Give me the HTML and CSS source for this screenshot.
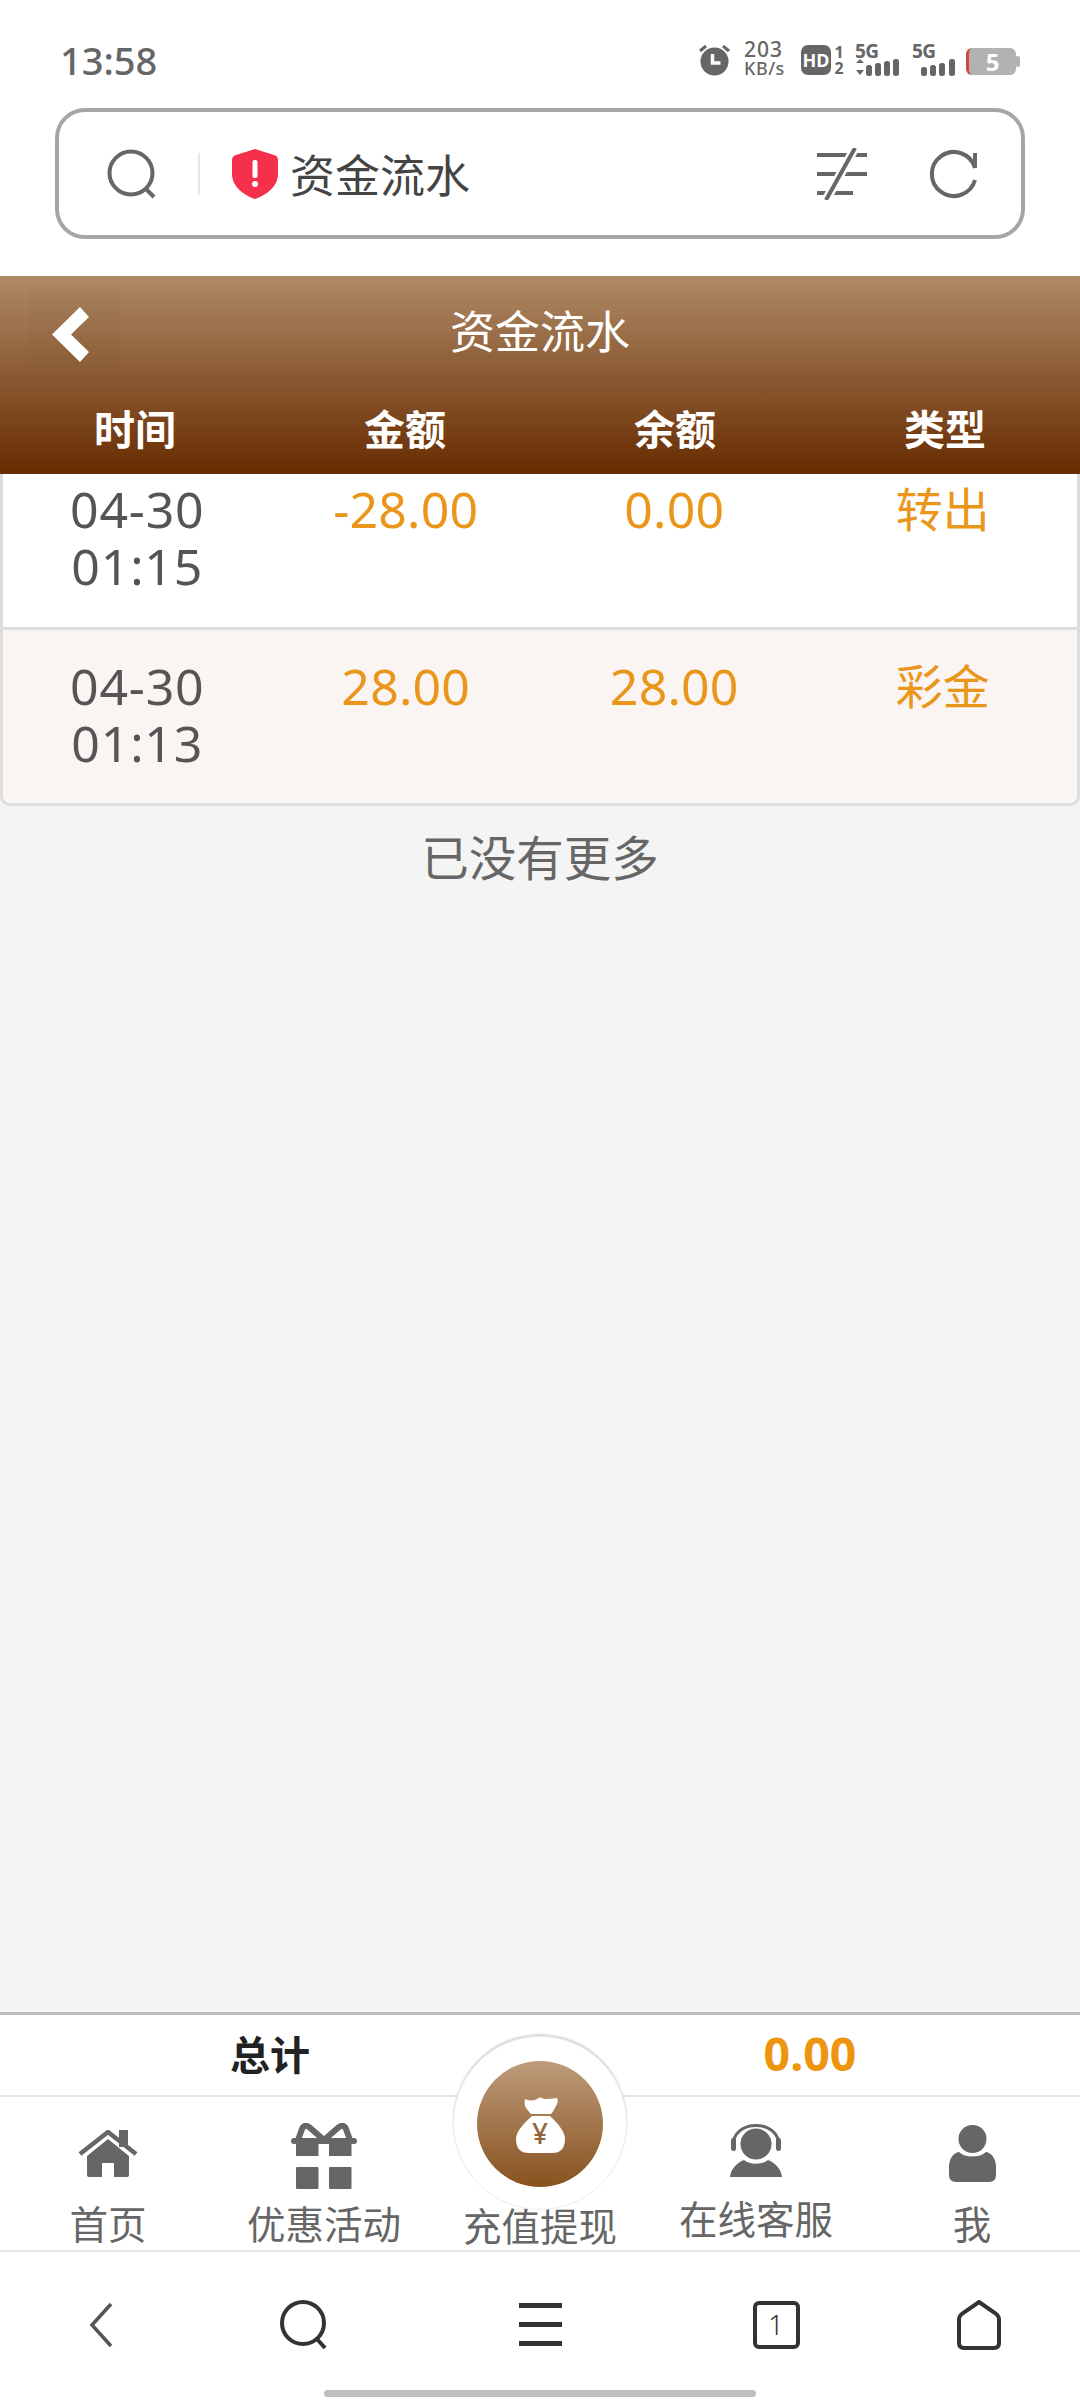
FILE: index.html
```html
<!DOCTYPE html>
<html>
<head>
  <meta charset="UTF-8">
  <title>资金流水</title>
  <link rel="stylesheet" href="styles.css">
</head>
<body>
  <div class="status-bar">
    <span class="clock">13:58</span>
    <div class="status-icons">
      <svg class="ic-alarm" width="33" height="32" viewBox="0 0 33 32">
        <circle cx="16.5" cy="17.5" r="14" fill="#666"/>
        <path d="M14.5 10v9h8" fill="none" stroke="#fff" stroke-width="3.5"/>
        <path d="M2 7l6-5M31 7l-6-5" stroke="#666" stroke-width="3"/>
      </svg>
      <div class="speed"><span>203</span><span class="speed-unit">KB/s</span></div>
      <div class="hd">HD</div>
      <div class="sim"><span>1</span><span>2</span></div>
      <div class="signal">
        <span class="sig-text">5G</span>
        <svg width="44" height="17" viewBox="0 0 44 17">
          <path d="M1 4l4-4 4 4zM1 11l4 5 4-5z" fill="#666"/>
          <rect x="11" y="6" width="6" height="11" rx="2.5" fill="#666"/>
          <rect x="20" y="4" width="6" height="13" rx="2.5" fill="#666"/>
          <rect x="29" y="2" width="6" height="15" rx="2.5" fill="#666"/>
          <rect x="38" y="0" width="6" height="17" rx="2.5" fill="#666"/>
        </svg>
      </div>
      <div class="signal signal-2">
        <span class="sig-text">5G</span>
        <svg width="44" height="17" viewBox="0 0 44 17">
          <rect x="9" y="8" width="6" height="9" rx="2.5" fill="#666"/>
          <rect x="18" y="6" width="6" height="11" rx="2.5" fill="#666"/>
          <rect x="27" y="4" width="6" height="13" rx="2.5" fill="#666"/>
          <rect x="37" y="0" width="6" height="17" rx="2.5" fill="#666"/>
        </svg>
      </div>
      <div class="battery">5</div>
    </div>
  </div>

  <div class="address-bar">
    <svg class="ic-search" width="50" height="50" viewBox="0 0 50 50">
      <circle cx="24" cy="24" r="21.5" fill="none" stroke="#666" stroke-width="4"/>
      <path d="M39 40l8 8" stroke="#666" stroke-width="4"/>
    </svg>
    <span class="address-sep"></span>
    <svg class="ic-shield" width="46" height="50" viewBox="0 0 46 50">
      <path d="M23 0l19 6q4 1 4 5v14c0 12-11 21-23 25C11 46 0 37 0 25V11q0-4 4-5z" fill="#f5304a"/>
      <rect x="20.5" y="11" width="5" height="18" rx="2" fill="#fff"/>
      <circle cx="23" cy="35" r="3" fill="#fff"/>
    </svg>
    <span class="address-text">资金流水</span>
    <svg class="ic-filter" width="52" height="52" viewBox="0 0 52 52">
      <path d="M1 7h50M1 26h50M1 45h36" stroke="#666" stroke-width="4"/>
      <path d="M39 0L10 52" stroke="#fff" stroke-width="9"/>
      <path d="M39 0L10 52" stroke="#666" stroke-width="4"/>
    </svg>
    <svg class="ic-refresh" width="50" height="50" viewBox="0 0 50 50">
      <path d="M46 19A22 22 0 1 0 46 31M46 4v15" fill="none" stroke="#666" stroke-width="4"/>
    </svg>
  </div>

  <div class="page-head">
    <div class="title-row">
      <div class="back-btn">
        <svg width="37" height="55" viewBox="0 0 37 55"><path d="M0 27.5L28 0l9 10-18 17.5L37 45l-9 10z" fill="#fff"/></svg>
      </div>
      <div class="page-title">资金流水</div>
    </div>
    <div class="col-row">
      <div>时间</div>
      <div>金额</div>
      <div>余额</div>
      <div>类型</div>
    </div>
  </div>

  <div class="main">
    <div class="flow-list">
      <div class="flow-row flow-row-cut">
        <div>04-30<br>01:15</div>
        <div class="money">-28.00</div>
        <div class="money">0.00</div>
        <div class="money kind">转出</div>
      </div>
      <div class="flow-row flow-row-alt">
        <div>04-30<br>01:13</div>
        <div class="money">28.00</div>
        <div class="money">28.00</div>
        <div class="money kind">彩金</div>
      </div>
    </div>
    <p class="no-more">已没有更多</p>
  </div>

  <div class="total-bar">
    <div class="total-label">总计</div>
    <div class="total-num">0.00</div>
  </div>

  <div class="tab-bar">
    <div class="tab tab-home">
      <svg width="60" height="47" viewBox="0 0 60 47">
        <rect x="41" y="0" width="9" height="17" fill="#666"/>
        <path d="M2 24L30 2l28 22" fill="none" stroke="#666" stroke-width="4.5"/>
        <path d="M9 26L30 9l21 17v19q0 2-2 2H36V33H24v14H11q-2 0-2-2z" fill="#666"/>
      </svg>
      <span>首页</span>
    </div>
    <div class="tab tab-gift">
      <svg width="66" height="66" viewBox="0 0 66 66">
        <path d="M33 17L18 4q-5-3-7 2L7 17M33 17L48 4q5-3 7 2l4 11" fill="none" stroke="#666" stroke-width="6"/>
        <rect x="0" y="15" width="66" height="6" rx="3" fill="#666"/>
        <rect x="5" y="21" width="22.5" height="12" fill="#666"/>
        <rect x="38" y="21" width="22.5" height="12" fill="#666"/>
        <rect x="5" y="44" width="22.5" height="22" rx="1" fill="#666"/>
        <rect x="38" y="44" width="22.5" height="22" rx="1" fill="#666"/>
      </svg>
      <span>优惠活动</span>
    </div>
    <div class="tab tab-center">
      <div class="wallet-ring">
        <div class="wallet-btn">
          <svg class="ic-bag" width="49" height="57" viewBox="0 0 49 57">
            <path d="M9 3q7 3 12 0 3-3 7 0 7 0 13-1 2 3-1 8-3 6-5 8H15q-4-4-6-8-1-4 0-7z" fill="#fff"/>
            <path d="M16 20h18q15 14 15 23 0 14-13 14H13Q0 57 0 43q0-9 16-23z" fill="#fff"/>
          </svg>
          <span class="yen">¥</span>
        </div>
      </div>
      <span>充值提现</span>
    </div>
    <div class="tab tab-service">
      <svg width="52" height="53" viewBox="0 0 52 53">
        <path d="M3 22C3 9 13 1.500 26 1.500S49 9 49 22" fill="none" stroke="#666" stroke-width="3"/>
        <rect x="1" y="14" width="5" height="13" rx="2.500" fill="#666"/>
        <rect x="46" y="14" width="5" height="13" rx="2.500" fill="#666"/>
        <circle cx="26" cy="20" r="15.500" fill="#666"/>
        <path d="M0 53c1-9 8-15 14-17 6 5 18 5 24 0 6 2 13 8 14 17z" fill="#666"/>
      </svg>
      <span>在线客服</span>
    </div>
    <div class="tab tab-me">
      <svg width="47" height="57" viewBox="0 0 47 57">
        <circle cx="23.500" cy="14" r="14" fill="#666"/>
        <path d="M10 27c6 6 21 6 27 0 6 1 10 7 10 15v8q0 7-7 7H7q-7 0-7-7v-8c0-8 4-14 10-15z" fill="#666"/>
      </svg>
      <span>我</span>
    </div>
  </div>

  <div class="nav-bar">
    <div class="nav-icons">
      <div class="nav-cell">
        <svg width="24" height="46" viewBox="0 0 24 46"><path d="M22 2L3 23l19 21" fill="none" stroke="#555" stroke-width="3.500"/></svg>
      </div>
      <div class="nav-cell">
        <svg width="48" height="50" viewBox="0 0 48 50">
          <circle cx="23" cy="23" r="21" fill="none" stroke="#333" stroke-width="4"/>
          <path d="M37 39l8 9" stroke="#333" stroke-width="4"/>
        </svg>
      </div>
      <div class="nav-cell">
        <div class="burger"><i></i><i></i><i></i></div>
      </div>
      <div class="nav-cell">
        <div class="tabs-count">1</div>
      </div>
      <div class="nav-cell">
        <svg width="44" height="50" viewBox="0 0 44 50">
          <path d="M22 2L38 13q4 3 4 6v24q0 5-5 5H7q-5 0-5-5V19q0-3 4-6z" fill="none" stroke="#333" stroke-width="4"/>
        </svg>
      </div>
    </div>
    <div class="home-bar"></div>
  </div>
</body>
</html>
```

FILE: styles.css
```css
* {
  box-sizing: border-box;
}

body {
  margin: 0;
  width: 1080px;
  height: 2400px;
  overflow: hidden;
  display: flex;
  flex-direction: column;
  background: #fff;
  font-family: "Noto Sans", "Noto Sans CJK SC", sans-serif;
}

svg {
  display: block;
}

/* status bar */
.status-bar {
  height: 108px;
  flex-shrink: 0;
  display: flex;
  justify-content: space-between;
  padding: 38px 60px 0 60px;
}

.clock {
  font-size: 38px;
  font-weight: 500;
  line-height: 44px;
  color: #666;
}

.status-icons {
  display: flex;
  align-items: flex-start;
  height: 40px;
  color: #666;
}

.ic-alarm {
  margin-top: 6px;
}

.speed {
  display: flex;
  flex-direction: column;
  margin-left: 13px;
  margin-top: 2px;
  width: 44px;
  font-size: 21px;
  line-height: 19px;
  font-weight: 500;
  letter-spacing: 1px;
}

.speed-unit {
  font-size: 18px;
  letter-spacing: 0.5px;
}

.hd {
  width: 30px;
  height: 30px;
  margin-left: 13px;
  margin-top: 7px;
  background: #666;
  border-radius: 7px;
  color: #fff;
  font-size: 18px;
  font-weight: 700;
  line-height: 30px;
  text-align: center;
}

.sim {
  display: flex;
  flex-direction: column;
  width: 12px;
  margin-left: 2px;
  margin-top: 6px;
  font-size: 16px;
  font-weight: 700;
  line-height: 16px;
  text-align: center;
}

.signal {
  width: 44px;
  margin-left: 10px;
  margin-top: 6px;
}

.signal-2 {
  margin-left: 13px;
}

.sig-text {
  display: block;
  height: 15px;
  font-size: 19px;
  font-weight: 700;
  line-height: 15px;
  letter-spacing: -0.5px;
}

.battery {
  position: relative;
  width: 50px;
  height: 27px;
  margin-left: 10px;
  margin-right: 4px;
  margin-top: 10px;
  border-left: 3px solid #d0483e;
  border-radius: 6px;
  background: #b2b2b2;
  color: #fff;
  font-size: 24px;
  font-weight: 700;
  line-height: 27px;
  text-align: center;
}

.battery::after {
  content: "";
  position: absolute;
  right: -4px;
  top: 8px;
  width: 5px;
  height: 11px;
  border-radius: 3px;
  background: #b2b2b2;
}

/* address bar */
.address-bar {
  height: 131px;
  flex-shrink: 0;
  margin: 0 55px;
  display: flex;
  align-items: center;
  border: 4px solid #a6a6a6;
  border-radius: 30px;
  padding-left: 48px;
  background: #fff;
}

.address-sep {
  width: 2px;
  height: 42px;
  margin-left: 41px;
  background: #e6e6e6;
}

.ic-shield {
  margin-left: 32px;
}

.address-text {
  margin-left: 12px;
  font-size: 45px;
  color: #444;
  flex: 1;
}

.ic-refresh {
  margin-left: 61px;
  margin-right: 42px;
}

/* page header */
.page-head {
  height: 198px;
  flex-shrink: 0;
  margin-top: 37px;
  background: linear-gradient(#ae8a66, #682b00);
  color: #fff;
}

.title-row {
  display: grid;
  grid-template-columns: 120px 1fr 120px;
  align-items: center;
  height: 116px;
}

.back-btn {
  width: 91px;
  height: 88px;
  margin-left: 29px;
  display: flex;
  align-items: center;
  padding-left: 23px;
  background: rgba(110, 70, 30, 0.05);
}

.page-title {
  text-align: center;
  font-size: 45px;
  line-height: 60px;
  padding-bottom: 5px;
}

.col-row {
  display: grid;
  grid-template-columns: repeat(4, 1fr);
  text-align: center;
  font-size: 41px;
  font-weight: 700;
  line-height: 74px;
}

/* list */
.main {
  flex: 1;
  background: #f4f4f4;
}

.flow-list {
  border: 3px solid #ddd;
  border-top: none;
  border-radius: 0 0 10px 10px;
  overflow: hidden;
}

.flow-row {
  display: grid;
  grid-template-columns: repeat(4, 1fr);
  text-align: center;
  padding: 28px 0 31px;
  font-size: 50px;
  line-height: 57px;
  letter-spacing: 0.8px;
  color: #555;
  background: #fff;
}

.flow-row-cut {
  padding: 7px 0 32px;
  border-bottom: 3px solid #ddd;
}

.flow-row-alt {
  background: #faf5f2;
}

.money {
  color: #e9961b;
  letter-spacing: 0.2px;
}

.kind {
  font-size: 47px;
  letter-spacing: 0;
}

.no-more {
  margin: 22px 0 0;
  text-align: center;
  font-size: 47.5px;
  line-height: 60px;
  color: #666;
}

/* total */
.total-bar {
  height: 85px;
  flex-shrink: 0;
  display: grid;
  grid-template-columns: 1fr 1fr;
  align-items: center;
  text-align: center;
  padding-bottom: 5px;
  border-top: 3px solid #bbb;
  border-bottom: 2px solid #e6e6e6;
  background: #fff;
}

.total-label {
  font-size: 40px;
  font-weight: 700;
  color: #222;
}

.total-num {
  font-size: 46.5px;
  font-weight: 700;
  color: #ee9510;
}

/* tabs */
.tab-bar {
  height: 155px;
  flex-shrink: 0;
  display: grid;
  grid-template-columns: repeat(5, 1fr);
  border-bottom: 2px solid #e8e8e8;
  background: #fff;
}

.tab {
  position: relative;
  display: flex;
  flex-direction: column;
  align-items: center;
  font-size: 38.5px;
  line-height: 44px;
  color: #666;
}

.tab-home {
  padding-top: 33px;
  gap: 25px;
}

.tab-gift {
  padding-top: 26px;
  gap: 13px;
}

.tab-center {
  padding-top: 107px;
}

.tab-service {
  padding-top: 27px;
  gap: 20px;
}

.tab-me {
  padding-top: 28px;
  gap: 20px;
}

.wallet-ring {
  position: absolute;
  top: -61px;
  left: 21px;
  width: 174px;
  height: 174px;
  display: flex;
  align-items: center;
  justify-content: center;
  border-radius: 50%;
  background: #fff;
  border: 1px solid #eee;
  box-shadow: 0 -2px 2px rgba(0, 0, 0, 0.16);
}

.wallet-btn {
  position: relative;
  width: 126px;
  height: 126px;
  margin-top: 2px;
  display: flex;
  align-items: center;
  justify-content: center;
  border-radius: 50%;
  background: linear-gradient(#bd9b7a, #88521f);
}

.yen {
  position: absolute;
  left: 0;
  right: 0;
  top: 54px;
  text-align: center;
  font-size: 28px;
  line-height: 36px;
  font-weight: 500;
  color: #96633a;
}

/* browser nav */
.nav-bar {
  height: 148px;
  flex-shrink: 0;
  display: flex;
  flex-direction: column;
  background: #fff;
}

.nav-icons {
  display: grid;
  grid-template-columns: 202px 204px 268px 204px 202px;
  height: 138px;
  align-items: center;
  padding-top: 7px;
}

.nav-cell {
  display: flex;
  justify-content: center;
}

.burger {
  display: flex;
  flex-direction: column;
  gap: 14px;
}

.burger i {
  display: block;
  width: 43px;
  height: 5px;
  background: #333;
}

.tabs-count {
  width: 47px;
  height: 48px;
  border: 4px solid #333;
  border-radius: 6px;
  font-size: 27px;
  line-height: 40px;
  font-weight: 300;
  text-align: center;
  color: #333;
}

.home-bar {
  width: 432px;
  height: 7px;
  margin: 0 auto;
  border-radius: 4px;
  background: #bfbfbf;
}
```
